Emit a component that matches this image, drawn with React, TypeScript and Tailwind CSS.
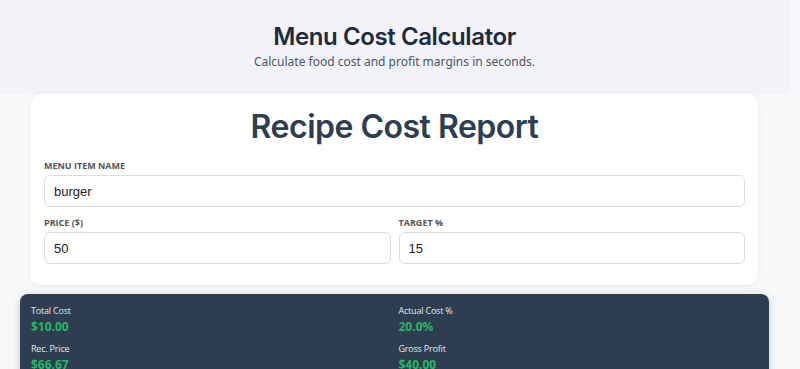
import React from "react";

const RESULTS = [
  ["Total Cost", "$10.00"],
  ["Actual Cost %", "20.0%"],
  ["Rec. Price", "$66.67"],
  ["Gross Profit", "$40.00"],
] as const;

export default function App() {
  return (
    <div className="min-h-screen bg-[#f7f8fa]">
      <div className="w-[789px] font-['Inter',sans-serif]">
        <header className="bg-[#f1f3f9] pt-[22px] pb-[23px] text-center">
          <h1 className="text-[24px] font-semibold leading-[30px] tracking-[-0.4px] text-[#1e2b3c]">Menu Cost Calculator</h1>
          <p className="mt-[1px] font-['Noto_Sans',sans-serif] text-[12px] leading-[18px] text-[#4a5568]">
            Calculate food cost and profit margins in seconds.
          </p>
        </header>

        <main className="px-[20px]">
          <section className="mx-[11px] rounded-[10px] bg-white px-[13px] pt-[10px] pb-[21px] shadow-[0_1px_6px_rgba(0,0,0,0.06)]">
            <h2 className="text-center text-[32px] font-semibold leading-[46px] tracking-[-0.5px] text-[#2c3e50]">Recipe Cost Report</h2>
            <Field label="Menu Item Name" value="burger" className="mt-[10px]" />
            <div className="mt-[10px] grid grid-cols-2 gap-[8px]">
              <Field label="Price ($)" value="50" />
              <Field label="Target %" value="15" />
            </div>
          </section>

          <section className="mt-[9px] rounded-[8px] bg-[#2c3e50] px-[11px] pt-[10px] pb-[14px] shadow-[0_2px_8px_rgba(0,0,0,0.2)]">
            <div className="grid grid-cols-2 gap-x-[8px] gap-y-[6px]">
              {RESULTS.map(([label, value]) => (
                <div key={label}>
                  <div className="font-['Open_Sans',sans-serif] text-[9px] leading-[14px] tracking-[-0.2px] text-[#e2e8f0]">{label}</div>
                  <div className="font-['Open_Sans',sans-serif] text-[12px] font-bold leading-[18px] text-[#2ab467]">{value}</div>
                </div>
              ))}
            </div>
          </section>
        </main>
      </div>
    </div>
  );
}

function Field({ label, value, className = "" }: { label: string; value: string; className?: string }) {
  return (
    <label className={`block ${className}`}>
      <div className="font-['Open_Sans',sans-serif] text-[9px] font-bold uppercase leading-[12px] text-[#555]">{label}</div>
      <input
        readOnly
        value={value}
        className="mt-[3px] h-[32px] w-full rounded-[6px] border border-[#dcdcdc] bg-white px-[9px] font-['Liberation_Sans',sans-serif] text-[13px] text-[#222] outline-none"
      />
    </label>
  );
}
